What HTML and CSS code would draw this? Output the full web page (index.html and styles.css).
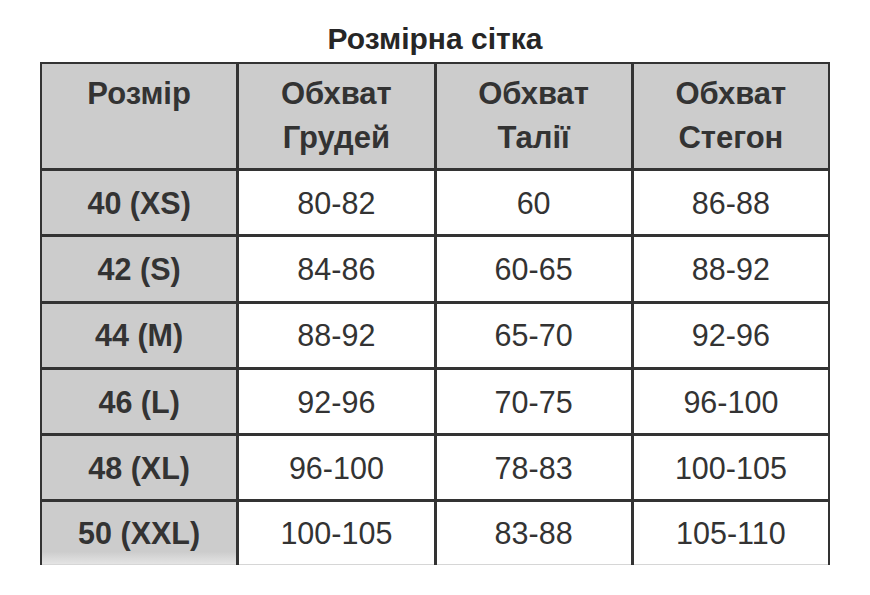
FILE: index.html
```html
<!DOCTYPE html>
<html lang="uk">
<head>
<meta charset="utf-8">
<title>Розмірна сітка</title>
<link rel="stylesheet" href="styles.css">
</head>
<body>
<div class="page">
  <h1 class="title">Розмірна сітка</h1>
  <div class="grid">
    <div class="cell head top">Розмір</div>
    <div class="cell head">Обхват<br>Грудей</div>
    <div class="cell head">Обхват<br>Талії</div>
    <div class="cell head">Обхват<br>Стегон</div>

    <div class="cell size">40 (XS)</div>
    <div class="cell">80-82</div>
    <div class="cell">60</div>
    <div class="cell">86-88</div>

    <div class="cell size">42 (S)</div>
    <div class="cell">84-86</div>
    <div class="cell">60-65</div>
    <div class="cell">88-92</div>

    <div class="cell size">44 (M)</div>
    <div class="cell">88-92</div>
    <div class="cell">65-70</div>
    <div class="cell">92-96</div>

    <div class="cell size">46 (L)</div>
    <div class="cell">92-96</div>
    <div class="cell">70-75</div>
    <div class="cell">96-100</div>

    <div class="cell size">48 (XL)</div>
    <div class="cell">96-100</div>
    <div class="cell">78-83</div>
    <div class="cell">100-105</div>

    <div class="cell size last">50 (XXL)</div>
    <div class="cell last">100-105</div>
    <div class="cell last">83-88</div>
    <div class="cell last">105-110</div>
  </div>
</div>
</body>
</html>
```
FILE: styles.css
```css
html, body {
  margin: 0;
  padding: 0;
  background: #ffffff;
}
body {
  font-family: "Liberation Sans", Arial, sans-serif;
  color: #333333;
}
.page {
  width: 790px;
  margin-left: 40px;
  padding-top: 22px;
}
.title {
  margin: 0 0 6px 0;
  font-size: 30px;
  line-height: 34px;
  font-weight: bold;
  text-align: center;
  color: #262626;
}
.grid {
  display: grid;
  grid-template-columns: repeat(4, 1fr);
  grid-template-rows: 104px repeat(5, 63.3px) 62.5px;
  gap: 3px;
  padding: 2px 2px 0 2px;
  background: #333333;
}
.cell {
  background: #ffffff;
  display: flex;
  align-items: center;
  justify-content: center;
  text-align: center;
  font-size: 30.5px;
  line-height: 44px;
}
.head {
  background: #cccccc;
  font-weight: bold;
  font-size: 31px;
  align-items: flex-start;
  padding-top: 8px;
  box-sizing: border-box;
}
.size {
  background: #cccccc;
  font-weight: bold;
}
.last {
  border-bottom: 1px solid #d6d6d6;
}
.size.last {
  background: linear-gradient(#cccccc 80%, #e4e4e4);
}
```
